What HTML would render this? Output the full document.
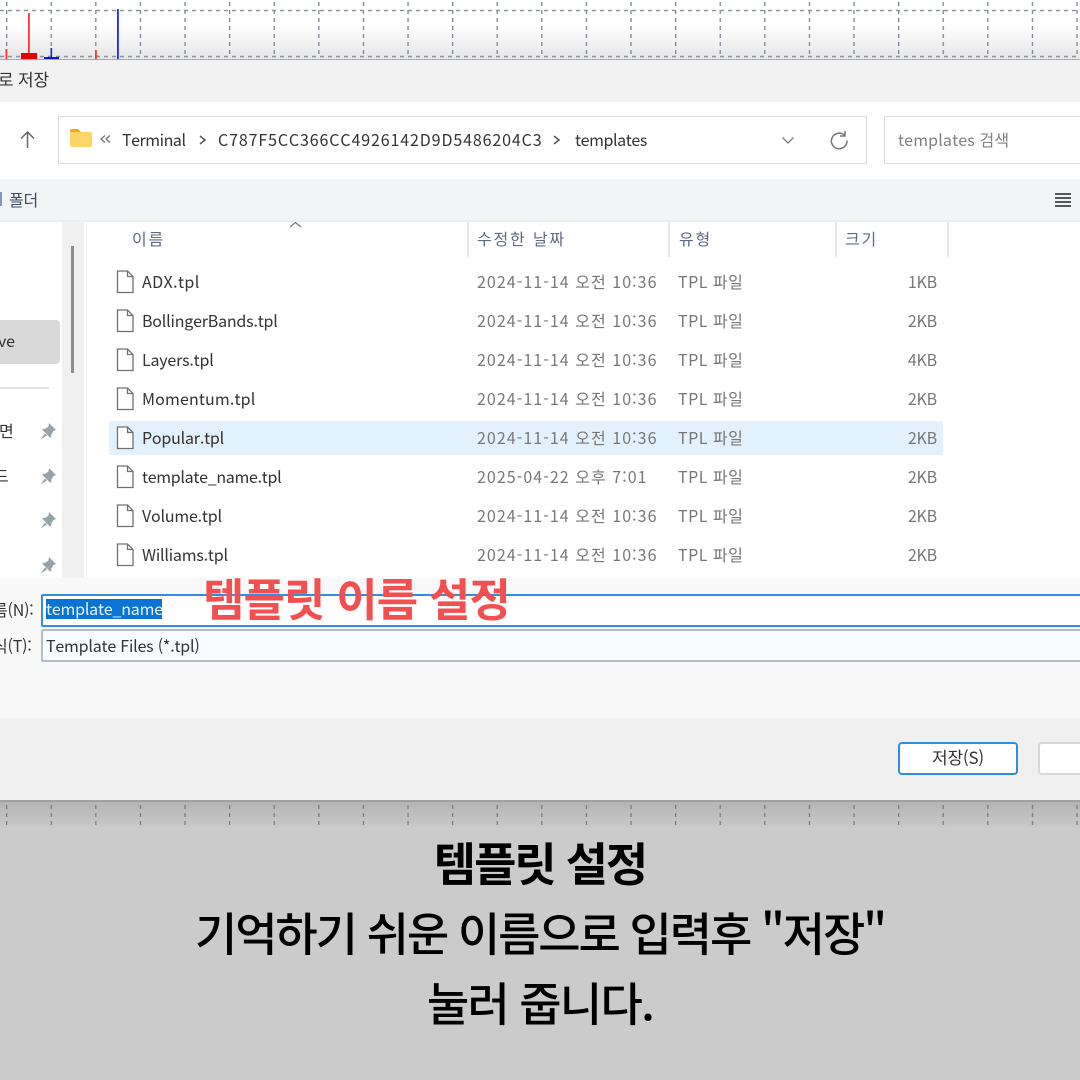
<!DOCTYPE html>
<html lang="ko">
<head>
<meta charset="utf-8">
<style>
html,body{margin:0;padding:0;background:#fff}
#p{position:relative;width:1080px;height:1080px;overflow:hidden;background:#fff;font-family:"Liberation Sans","Noto Sans CJK KR",sans-serif;color:#333}
#p div,#p svg{position:absolute}
.t{white-space:nowrap;font-size:16px;line-height:22px;margin-top:-1px;font-family:"Noto Sans CJK KR","Liberation Sans",sans-serif;letter-spacing:-.2px;font-kerning:none}
.g{color:#777}
.h{color:#5f6b7f;letter-spacing:1.8px;margin-top:0}
.s{width:42px;text-align:right}
.d{letter-spacing:1.05px}
.y{letter-spacing:.5px}
</style>
</head>
<body>
<div id="p">
<!-- chart top -->
<div style="left:0;top:0;width:1080px;height:60px;background:linear-gradient(#fff 0,#fff 25px,#e6e6e6 58px)"></div>
<svg style="left:0;top:0" width="1080" height="60">
<defs><pattern id="v" x="6" y="0" width="44.6" height="60" patternUnits="userSpaceOnUse"><line x1="0.5" y1="2" x2="0.5" y2="58" stroke="#76808e" stroke-width="1.500" stroke-dasharray="4 4"/></pattern></defs>
<rect width="1080" height="60" fill="url(#v)"/>
<line x1="0" y1="10.5" x2="1080" y2="10.5" stroke="#8a93a0" stroke-width="1.400" stroke-dasharray="4 4"/>
<line x1="0" y1="56.5" x2="1080" y2="56.5" stroke="#8a93a0" stroke-width="1.400" stroke-dasharray="4 4"/>
<rect x="5.5" y="49" width="1.8" height="11" fill="#f33"/>
<rect x="28" y="13" width="1.8" height="42" fill="#f33"/>
<rect x="21" y="53" width="16" height="7" fill="#e60000"/>
<rect x="50.5" y="48" width="1.6" height="10" fill="#22d"/>
<rect x="44" y="57" width="15" height="3" fill="#11d"/>
<rect x="95" y="50" width="1.8" height="10" fill="#f33"/>
<rect x="117" y="9" width="1.800" height="51" fill="#22f"/>
</svg>
<div style="left:0;top:59px;width:1080px;height:1px;background:#a9a9a9"></div>

<!-- title -->
<div style="left:0;top:60px;width:1080px;height:42px;background:#f2f2f2"></div>
<div class="t" style="left:-2px;top:69px;font-size:17px">로 저장</div>

<!-- nav -->
<div style="left:0;top:102px;width:1080px;height:77px;background:#fff"></div>
<svg style="left:18px;top:130px" width="20" height="20" fill="none" stroke="#666" stroke-width="1.5"><path d="M9.5 2V18M3 8.5L9.5 2L16 8.5"/></svg>
<div style="left:58px;top:116px;width:807px;height:46px;border:1.5px solid #dcdcdc;background:#fff"></div>
<svg style="left:70px;top:128px" width="23" height="20"><path d="M0 3a2 2 0 0 1 2-2h6l3 3h0H0z" fill="#eeaa10"/><path d="M0 4H20a2 2 0 0 1 2 2V17a2 2 0 0 1-2 2H2a2 2 0 0 1-2-2z" fill="#fbd666"/></svg>
<svg style="left:100px;top:134px" width="11" height="11" fill="none" stroke="#777" stroke-width="1.300"><path d="M5 1.500L1 5L5 8.500M10 1.500L6 5L10 8.500"/></svg>
<div class="t" style="left:122px;top:129px;letter-spacing:-.45px">Terminal</div>
<svg style="left:198px;top:134px" width="10" height="12" fill="none" stroke="#555" stroke-width="1.5"><path d="M2 2L7 6L2 10"/></svg>
<div class="t" style="left:218px;top:129px;letter-spacing:.88px">C787F5CC366CC4926142D9D5486204C3</div>
<svg style="left:552px;top:134px" width="10" height="12" fill="none" stroke="#555" stroke-width="1.5"><path d="M2 2L7 6L2 10"/></svg>
<div class="t" style="left:575px;top:129px;letter-spacing:-.4px">templates</div>
<svg style="left:781px;top:136px" width="14" height="10" fill="none" stroke="#777" stroke-width="1.3"><path d="M1.500 1.500L7 7L12.500 1.500"/></svg>
<svg style="left:829px;top:130px" width="21" height="21" fill="none" stroke="#777" stroke-width="1.500"><path d="M15.500 5.200A7.800 7.800 0 1 0 18 10.500"/><path d="M16 1V6H11"/></svg>
<div style="left:884px;top:116px;width:210px;height:46px;border:1.5px solid #dcdcdc;background:#fff"></div>
<div class="t" style="left:898px;top:129px;color:#808080;letter-spacing:.15px">templates 검색</div>

<!-- toolbar -->
<div style="left:0;top:179px;width:1080px;height:41px;background:#f3f4f6"></div>
<div style="left:0;top:220px;width:1080px;height:2px;background:#eeeeee"></div>
<div class="t" style="left:9px;top:189px;color:#3f4a5a">폴더</div>
<div style="left:0;top:192px;width:2px;height:14px;background:#7f9ac0"></div>
<svg style="left:1054px;top:192px" width="18" height="15" stroke="#222" stroke-width="1.500"><path d="M1 2H17M1 6H17M1 10H17M1 14H17"/></svg>

<!-- left pane -->
<div style="left:0;top:320px;width:60px;height:44px;background:#d9d9d9;border-radius:0 4px 4px 0"></div>
<div class="t" style="left:-2px;top:330px">ve</div>
<div style="left:0;top:387px;width:49px;height:1.500px;background:#e2e2e2"></div>
<div class="t" style="left:-1px;top:420px">면</div>
<div class="t" style="left:-6px;top:465px">드</div>
<svg style="left:39px;top:422px" width="18" height="18" fill="#97a1a8"><path d="M10 1L17 8L14.500 9L12 13L12.500 15L11 15.500L3.500 8L4 6.500L6 7L9.500 4.500zM6 11.500L8 13.500L1.500 17.500z"/></svg>
<svg style="left:39px;top:467px" width="18" height="18" fill="#97a1a8"><path d="M10 1L17 8L14.500 9L12 13L12.500 15L11 15.500L3.500 8L4 6.500L6 7L9.500 4.500zM6 11.500L8 13.500L1.500 17.500z"/></svg>
<svg style="left:39px;top:511px" width="18" height="18" fill="#97a1a8"><path d="M10 1L17 8L14.500 9L12 13L12.500 15L11 15.500L3.500 8L4 6.500L6 7L9.500 4.500zM6 11.500L8 13.500L1.500 17.500z"/></svg>
<svg style="left:39px;top:556px" width="18" height="18" fill="#97a1a8"><path d="M10 1L17 8L14.500 9L12 13L12.500 15L11 15.500L3.500 8L4 6.500L6 7L9.500 4.500zM6 11.500L8 13.500L1.500 17.500z"/></svg>

<!-- scrollbar -->
<div style="left:62px;top:222px;width:22px;height:356px;background:#f0f0f0"></div>
<div style="left:71px;top:246px;width:3px;height:127px;background:#8c8c8c"></div>
<div style="left:86px;top:222px;width:1px;height:356px;background:#f1f1f1"></div>

<!-- header -->
<div class="t h" style="left:132px;top:227px">이름</div>
<svg style="left:289px;top:221px" width="13" height="8" fill="none" stroke="#777" stroke-width="1.200"><path d="M1 6L6.500 1.500L12 6"/></svg>
<div style="left:467px;top:222px;width:1.500px;height:35px;background:#e8e8e8"></div>
<div style="left:668px;top:222px;width:1.500px;height:35px;background:#e8e8e8"></div>
<div style="left:835px;top:222px;width:1.500px;height:35px;background:#e8e8e8"></div>
<div style="left:947px;top:222px;width:1.500px;height:35px;background:#e8e8e8"></div>
<div class="t h" style="left:477px;top:227px">수정한 날짜</div>
<div class="t h" style="left:679px;top:227px">유형</div>
<div class="t h" style="left:845px;top:227px">크기</div>

<!-- selected row -->
<div style="left:109px;top:421px;width:834px;height:34px;background:#e3f1fc;border-radius:2px"></div>

<!-- rows -->
<svg style="left:116px;top:270px" width="19" height="24" fill="#fff" stroke="#707070" stroke-width="1.300"><path d="M1.500 1H11.500L17 6.500V22.500H1.500zM11.500 1V6.500H17"/></svg>
<div class="t" style="left:142px;top:271px;letter-spacing:.4px">ADX.tpl</div>
<div class="t g d" style="left:477px;top:271px">2024-11-14 오전 10:36</div>
<div class="t g y" style="left:678px;top:271px">TPL 파일</div>
<div class="t g s" style="left:895px;top:271px">1KB</div>

<svg style="left:116px;top:309px" width="19" height="24" fill="#fff" stroke="#707070" stroke-width="1.300"><path d="M1.500 1H11.500L17 6.500V22.500H1.500zM11.500 1V6.500H17"/></svg>
<div class="t" style="left:142px;top:310px">BollingerBands.tpl</div>
<div class="t g d" style="left:477px;top:310px">2024-11-14 오전 10:36</div>
<div class="t g y" style="left:678px;top:310px">TPL 파일</div>
<div class="t g s" style="left:895px;top:310px">2KB</div>

<svg style="left:116px;top:348px" width="19" height="24" fill="#fff" stroke="#707070" stroke-width="1.300"><path d="M1.500 1H11.500L17 6.500V22.500H1.500zM11.500 1V6.500H17"/></svg>
<div class="t" style="left:142px;top:349px">Layers.tpl</div>
<div class="t g d" style="left:477px;top:349px">2024-11-14 오전 10:36</div>
<div class="t g y" style="left:678px;top:349px">TPL 파일</div>
<div class="t g s" style="left:895px;top:349px">4KB</div>

<svg style="left:116px;top:387px" width="19" height="24" fill="#fff" stroke="#707070" stroke-width="1.300"><path d="M1.500 1H11.500L17 6.500V22.500H1.500zM11.500 1V6.500H17"/></svg>
<div class="t" style="left:142px;top:388px;letter-spacing:.15px">Momentum.tpl</div>
<div class="t g d" style="left:477px;top:388px">2024-11-14 오전 10:36</div>
<div class="t g y" style="left:678px;top:388px">TPL 파일</div>
<div class="t g s" style="left:895px;top:388px">2KB</div>

<svg style="left:116px;top:426px" width="19" height="24" fill="#fff" stroke="#707070" stroke-width="1.300"><path d="M1.500 1H11.500L17 6.500V22.500H1.500zM11.500 1V6.500H17"/></svg>
<div class="t" style="left:142px;top:427px">Popular.tpl</div>
<div class="t g d" style="left:477px;top:427px">2024-11-14 오전 10:36</div>
<div class="t g y" style="left:678px;top:427px">TPL 파일</div>
<div class="t g s" style="left:895px;top:427px">2KB</div>

<svg style="left:116px;top:465px" width="19" height="24" fill="#fff" stroke="#707070" stroke-width="1.300"><path d="M1.500 1H11.500L17 6.500V22.500H1.500zM11.500 1V6.500H17"/></svg>
<div class="t" style="left:142px;top:466px;letter-spacing:-.3px">template_name.tpl</div>
<div class="t g d" style="left:477px;top:466px">2025-04-22 오후 7:01</div>
<div class="t g y" style="left:678px;top:466px">TPL 파일</div>
<div class="t g s" style="left:895px;top:466px">2KB</div>

<svg style="left:116px;top:504px" width="19" height="24" fill="#fff" stroke="#707070" stroke-width="1.300"><path d="M1.500 1H11.500L17 6.500V22.500H1.500zM11.500 1V6.500H17"/></svg>
<div class="t" style="left:142px;top:505px">Volume.tpl</div>
<div class="t g d" style="left:477px;top:505px">2024-11-14 오전 10:36</div>
<div class="t g y" style="left:678px;top:505px">TPL 파일</div>
<div class="t g s" style="left:895px;top:505px">2KB</div>

<svg style="left:116px;top:543px" width="19" height="24" fill="#fff" stroke="#707070" stroke-width="1.300"><path d="M1.500 1H11.500L17 6.500V22.500H1.500zM11.500 1V6.500H17"/></svg>
<div class="t" style="left:142px;top:544px">Williams.tpl</div>
<div class="t g d" style="left:477px;top:544px">2024-11-14 오전 10:36</div>
<div class="t g y" style="left:678px;top:544px">TPL 파일</div>
<div class="t g s" style="left:895px;top:544px">2KB</div>

<!-- form area -->
<div style="left:0;top:578px;width:1080px;height:140px;background:#f9f9f9"></div>
<div class="t" style="left:-7px;top:599px">름(N):</div>
<div class="t" style="left:-7px;top:635px">식(T):</div>
<div style="left:41px;top:594px;width:1060px;height:29px;background:#fff;border:2px solid #2f8ee0;border-radius:2px"></div>
<div style="left:46px;top:599px;width:116px;height:20px;background:#0a74d6"></div>
<div class="t" style="left:46px;top:598px;color:#e8f3ff">template_name</div>
<div style="left:41px;top:629px;width:1060px;height:29px;background:#f8fbff;border:2px solid #b4bcc6;border-radius:2px"></div>
<div class="t" style="left:46px;top:635px">Template Files (*.tpl)</div>
<div class="t" style="left:203px;top:566px;margin-top:0;font-size:45px;line-height:62px;font-weight:700;color:#f25050;letter-spacing:-.9px">템플릿 이름 설정</div>

<!-- button bar -->
<div style="left:0;top:718px;width:1080px;height:82px;background:#f0f0f0"></div>
<div style="left:898px;top:742px;width:116px;height:29px;background:#fff;border:2px solid #2f8ee0;border-radius:4px"></div>
<div class="t" style="left:898px;top:747px;width:120px;text-align:center;font-size:17px">저장(S)</div>
<div style="left:1038px;top:742px;width:60px;height:29px;background:#fff;border:2px solid #d8d8d8;border-radius:4px"></div>

<!-- bottom overlay -->
<div style="left:0;top:800px;width:1080px;height:280px;background:#cbcbcb"></div>
<div style="left:0;top:800px;width:1080px;height:27px;background:linear-gradient(#b3b3b3,#c8c8c8)"></div>
<div style="left:0;top:800px;width:1080px;height:1.500px;background:#a0a0a0"></div>
<svg style="left:0;top:800px" width="1080" height="30">
<defs><pattern id="w" x="6" y="0" width="44.6" height="30" patternUnits="userSpaceOnUse"><line x1="0.500" y1="5" x2="0.500" y2="27" stroke="#717b88" stroke-width="1.500" stroke-dasharray="4 4"/></pattern></defs>
<rect width="1080" height="30" fill="url(#w)"/>
</svg>
<div style="left:0;top:832px;width:1080px;text-align:center;font-family:'Noto Sans CJK KR',sans-serif;font-size:46px;line-height:60px;font-weight:700;color:#000;letter-spacing:-2px">템플릿 설정</div>
<div style="left:0;top:902px;width:1080px;text-align:center;font-family:'Noto Sans CJK KR',sans-serif;font-size:46px;line-height:60px;font-weight:500;color:#000;letter-spacing:-2.1px">기억하기 쉬운 이름으로 입력후 "저장"</div>
<div style="left:0;top:972px;width:1080px;text-align:center;font-family:'Noto Sans CJK KR',sans-serif;font-size:46px;line-height:60px;font-weight:500;color:#000;letter-spacing:-1.700px">눌러 줍니다.</div>
</div>
</body>
</html>
